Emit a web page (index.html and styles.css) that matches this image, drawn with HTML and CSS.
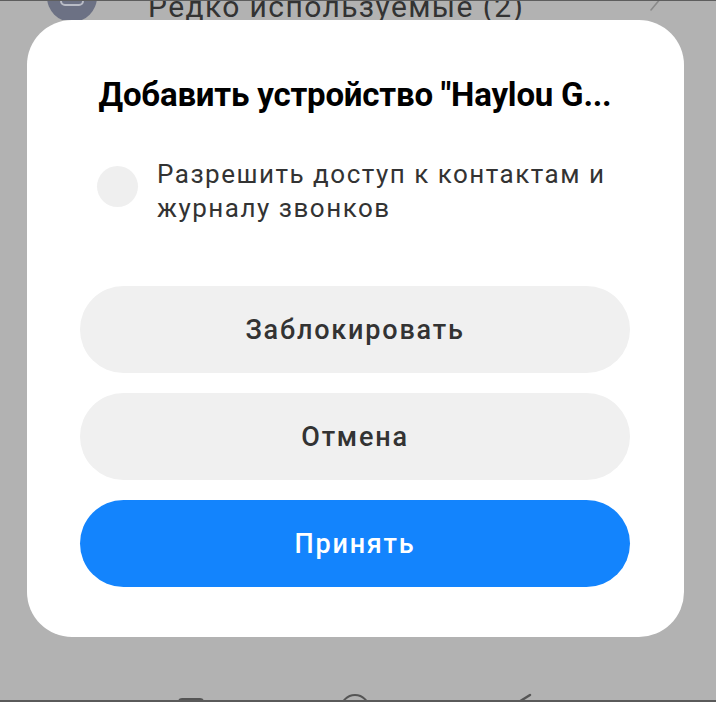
FILE: index.html
```html
<!DOCTYPE html>
<html lang="ru">
<head>
  <meta charset="UTF-8" />
  <meta name="viewport" content="width=device-width, initial-scale=1.0"/>
  <title>Добавить устройство</title>
  <link rel="stylesheet" href="styles.css">
</head>
<body>

  <!-- list row behind the dimmed overlay -->
  <div class="app-row">
    <div class="app-icon"><span class="app-icon-box"></span></div>
    <span class="app-label">Редко используемые (2)</span>
    <svg class="chevron" width="16" height="19" viewBox="0 0 16 19">
      <path d="M13 -3 L3 9" stroke="#8a8a8a" stroke-width="1.6" fill="none" stroke-linecap="round"/>
    </svg>
  </div>

  <div class="dialog">
    <h1 class="dialog-title">Добавить устройство "Haylou G...</h1>

    <label class="check-row">
      <span class="radio"></span>
      <span class="check-text">Разрешить доступ к контактам и журналу звонков</span>
    </label>

    <div class="actions">
      <button class="btn">Заблокировать</button>
      <button class="btn">Отмена</button>
      <button class="btn btn-primary">Принять</button>
    </div>
  </div>

  <!-- navigation keys, only their tops show -->
  <div class="nav-keys">
    <span class="key-square"></span>
    <span class="key-circle"></span>
    <svg class="key-back" width="30" height="8" viewBox="0 0 30 8">
      <path d="M22 2 L6 12" stroke="#555" stroke-width="2.4" fill="none" stroke-linecap="round"/>
    </svg>
  </div>

</body>
</html>
```

FILE: styles.css
```css
body {
  margin: 0;
  height: 702px;
  overflow: hidden;
  box-sizing: border-box;
  background-color: #b2b2b2;
  border-top: 1px solid #5e5e5e;
  font-family: Roboto, "Noto Sans", sans-serif;
  display: flex;
  flex-direction: column;
}

.app-row {
  height: 19px;
  overflow: hidden;
  display: flex;
  align-items: flex-end;
  flex-shrink: 0;
}

.app-icon {
  width: 50px;
  height: 50px;
  margin-left: 47px;
  margin-bottom: -2px;
  border-radius: 50%;
  background-color: #6c7184;
  display: flex;
  justify-content: center;
  align-items: flex-start;
  flex-shrink: 0;
}

.app-icon-box {
  width: 20px;
  height: 22px;
  margin-top: 8px;
  border: 2px solid #b9bcc6;
  border-radius: 5px;
}

.app-label {
  margin-left: 51px;
  margin-bottom: -2px;
  font-size: 30px;
  line-height: 30px;
  letter-spacing: 1.4px;
  color: #333;
  white-space: nowrap;
}

.chevron {
  margin-left: auto;
  margin-right: 52px;
}

.dialog {
  width: 657px;
  height: 617px;
  margin-left: 27px;
  box-sizing: border-box;
  padding: 55px 54px 0 53px;
  background-color: #fff;
  border-radius: 45px;
  flex-shrink: 0;
}

.dialog-title {
  margin: 0;
  font-size: 33px;
  line-height: 40px;
  font-weight: 700;
  letter-spacing: -0.2px;
  color: #000;
  text-align: center;
  white-space: nowrap;
}

.check-row {
  display: flex;
  align-items: flex-start;
  margin-top: 42px;
  padding-left: 17px;
}

.radio {
  width: 41px;
  height: 41px;
  margin-top: 9px;
  border-radius: 50%;
  background-color: #efefef;
  flex-shrink: 0;
}

.check-text {
  margin-left: 19px;
  font-size: 26px;
  line-height: 34px;
  letter-spacing: 1.5px;
  color: #333;
}

.actions {
  display: flex;
  flex-direction: column;
  gap: 20px;
  margin-top: 61px;
}

.btn {
  height: 87px;
  border: none;
  border-radius: 44px;
  background-color: #f0f0f0;
  color: #333;
  font-family: inherit;
  font-size: 27px;
  font-weight: 500;
  letter-spacing: 1.8px;
  cursor: pointer;
}

.btn-primary {
  background-color: #1384fd;
  color: #fff;
}

.nav-keys {
  margin-top: auto;
  height: 7px;
  overflow: hidden;
  border-bottom: 2px solid #5a5a5a;
  position: relative;
  flex-shrink: 0;
}

.key-square {
  position: absolute;
  left: 178px;
  top: 5px;
  width: 22px;
  height: 22px;
  border: 2px solid #555;
  border-radius: 4px;
}

.key-circle {
  position: absolute;
  left: 340px;
  top: 1px;
  width: 26px;
  height: 26px;
  border: 2.5px solid #555;
  border-radius: 50%;
}

.key-back {
  position: absolute;
  left: 508px;
  top: 0;
}
```
